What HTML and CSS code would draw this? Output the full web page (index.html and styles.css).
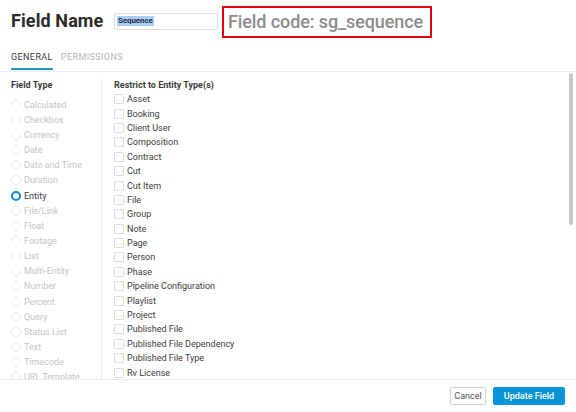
FILE: index.html
```html
<!DOCTYPE html>
<html>
<head>
<meta charset="utf-8">
<link rel="stylesheet" href="styles.css">
</head>
<body>
<div class="dialog">
  <div class="header">
    <h1 class="title">Field Name</h1>
    <div class="name-input"><span class="sel">Sequence</span></div>
    <div class="code-box">Field code: sg_sequence</div>
  </div>
  <div class="tabs">
    <div class="tab active">GENERAL</div>
    <div class="tab">PERMISSIONS</div>
  </div>
  <div class="body">
    <div class="col-types">
      <div class="heading">Field Type</div>
      <div class="radio-row"><span class="radio"></span>Calculated</div>
      <div class="radio-row"><span class="radio"></span>Checkbox</div>
      <div class="radio-row"><span class="radio"></span>Currency</div>
      <div class="radio-row"><span class="radio"></span>Date</div>
      <div class="radio-row"><span class="radio"></span>Date and Time</div>
      <div class="radio-row"><span class="radio"></span>Duration</div>
      <div class="radio-row on"><span class="radio"></span>Entity</div>
      <div class="radio-row"><span class="radio"></span>File/Link</div>
      <div class="radio-row"><span class="radio"></span>Float</div>
      <div class="radio-row"><span class="radio"></span>Footage</div>
      <div class="radio-row"><span class="radio"></span>List</div>
      <div class="radio-row"><span class="radio"></span>Multi-Entity</div>
      <div class="radio-row"><span class="radio"></span>Number</div>
      <div class="radio-row"><span class="radio"></span>Percent</div>
      <div class="radio-row"><span class="radio"></span>Query</div>
      <div class="radio-row"><span class="radio"></span>Status List</div>
      <div class="radio-row"><span class="radio"></span>Text</div>
      <div class="radio-row"><span class="radio"></span>Timecode</div>
      <div class="radio-row"><span class="radio"></span>URL Template</div>
    </div>
    <div class="col-entities">
      <div class="heading">Restrict to Entity Type(s)</div>
      <div class="check-list">
        <div class="check-row"><span class="box"></span>Asset</div>
        <div class="check-row"><span class="box"></span>Booking</div>
        <div class="check-row"><span class="box"></span>Client User</div>
        <div class="check-row"><span class="box"></span>Composition</div>
        <div class="check-row"><span class="box"></span>Contract</div>
        <div class="check-row"><span class="box"></span>Cut</div>
        <div class="check-row"><span class="box"></span>Cut Item</div>
        <div class="check-row"><span class="box"></span>File</div>
        <div class="check-row"><span class="box"></span>Group</div>
        <div class="check-row"><span class="box"></span>Note</div>
        <div class="check-row"><span class="box"></span>Page</div>
        <div class="check-row"><span class="box"></span>Person</div>
        <div class="check-row"><span class="box"></span>Phase</div>
        <div class="check-row"><span class="box"></span>Pipeline Configuration</div>
        <div class="check-row"><span class="box"></span>Playlist</div>
        <div class="check-row"><span class="box"></span>Project</div>
        <div class="check-row"><span class="box"></span>Published File</div>
        <div class="check-row"><span class="box"></span>Published File Dependency</div>
        <div class="check-row"><span class="box"></span>Published File Type</div>
        <div class="check-row"><span class="box"></span>Rv License</div>
      </div>
    </div>
    <div class="scrollbar"></div>
  </div>
  <div class="footer">
    <button class="btn cancel">Cancel</button>
    <button class="btn primary">Update Field</button>
  </div>
</div>
</body>
</html>
```

FILE: styles.css
```css
html, body {
  margin: 0;
  padding: 0;
  background: #ffffff;
}

body {
  font-family: Roboto, "Liberation Sans", sans-serif;
  color: #3c3c3c;
  width: 576px;
  height: 412px;
  overflow: hidden;
}

.dialog {
  display: flex;
  flex-direction: column;
  height: 412px;
}

.header {
  height: 42px;
  display: flex;
  align-items: center;
  padding-left: 11px;
  box-sizing: border-box;
}

.title {
  margin: 0;
  font-size: 18px;
  font-weight: 700;
  color: #2b2b2b;
  letter-spacing: 0.1px;
  line-height: 20px;
  width: 103px;
}

.name-input {
  width: 100px;
  height: 15px;
  border: 1px solid #dcdcdc;
  border-radius: 2px;
  display: flex;
  align-items: center;
  padding-left: 2px;
  box-sizing: content-box;
}

.sel {
  background: #a9cff5;
  font-size: 8px;
  font-weight: 700;
  color: #2a2a4a;
  line-height: 10px;
  padding: 0 1px;
  letter-spacing: -0.1px;
}

.code-box {
  margin-left: 4px;
  margin-top: 1px;
  width: 202px;
  height: 28px;
  border: 2px solid #e2000f;
  display: flex;
  align-items: center;
  padding-left: 4px;
  font-size: 18px;
  font-weight: 500;
  color: #8c8c8c;
  letter-spacing: -0.1px;
}

.tabs {
  height: 29px;
  border-bottom: 1px solid #ebebeb;
  display: flex;
  padding-left: 11px;
  gap: 8px;
}

.tab {
  font-size: 9px;
  letter-spacing: 0.4px;
  color: #b4b4b4;
  line-height: 11px;
  padding-top: 10px;
  height: 19px;
  box-sizing: content-box;
}

.tab.active {
  color: #3c3c3c;
  border-bottom: 2px solid #2a90d2;
  height: 16px;
  padding-top: 10px;
}

.body {
  position: relative;
  flex: 1;
  display: flex;
  overflow: hidden;
  padding-top: 6px;
}

.col-types {
  width: 90px;
  padding-left: 11px;
  border-right: 1px solid #ebebeb;
  flex: none;
}

.heading {
  font-size: 9px;
  font-weight: 700;
  line-height: 12px;
  color: #3c3c3c;
  padding-top: 1px;
}

.col-types .heading {
  margin-bottom: 6px;
}

.radio-row {
  height: 15.16px;
  display: flex;
  align-items: center;
  font-size: 9px;
  color: #c4c4c4;
  white-space: nowrap;
}

.radio {
  width: 10px;
  height: 10px;
  border: 1px solid #ececec;
  border-radius: 50%;
  box-sizing: border-box;
  margin-right: 3px;
  flex: none;
}

.radio-row.on {
  color: #3c3c3c;
}

.radio-row.on .radio {
  border: 2.5px solid #0a8fd6;
}

.col-entities {
  padding-left: 12px;
  flex: 1;
}

.check-list {
  margin-top: 1px;
}

.check-row {
  height: 14.4px;
  display: flex;
  align-items: center;
  font-size: 9px;
  color: #3c3c3c;
  white-space: nowrap;
}

.box {
  width: 10px;
  height: 10px;
  border: 1px solid #dcdcdc;
  border-radius: 1px;
  box-sizing: border-box;
  margin-right: 3px;
  flex: none;
}

.scrollbar {
  position: absolute;
  right: 3px;
  top: 1px;
  width: 4px;
  height: 152px;
  border-radius: 2px;
  background: #c8c8c8;
}

.footer {
  height: 32px;
  border-top: 1px solid #ebebeb;
  display: flex;
  align-items: center;
  justify-content: flex-end;
  padding-right: 11px;
  gap: 7px;
  flex: none;
}

.btn {
  font-family: Roboto, "Liberation Sans", sans-serif;
  font-size: 9px;
  height: 18px;
  border-radius: 2px;
  padding: 0 6px;
  margin: 0;
  cursor: pointer;
}

.cancel {
  background: #ffffff;
  border: 1px solid #d0d0d0;
  color: #555555;
  width: 36px;
  padding: 0;
}

.primary {
  background: #0696d7;
  border: 1px solid #0696d7;
  color: #ffffff;
  font-weight: 500;
  width: 72px;
  padding: 0;
}
```
